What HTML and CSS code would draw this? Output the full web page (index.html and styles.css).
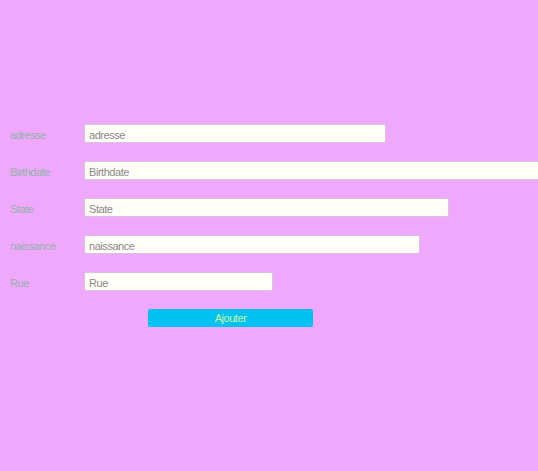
FILE: index.html
```html
<!DOCTYPE html>
<html>
<head>
<meta charset="utf-8">
<link rel="stylesheet" href="styles.css">
</head>
<body>
<form class="form">
  <div class="row"><label class="lbl">adresse</label><input class="field w-adresse" placeholder="adresse"></div>
  <div class="row"><label class="lbl">Birthdate</label><input class="field w-birth" placeholder="Birthdate"></div>
  <div class="row"><label class="lbl">State</label><input class="field w-state" placeholder="State"></div>
  <div class="row"><label class="lbl">naissance</label><input class="field w-naiss" placeholder="naissance"></div>
  <div class="row"><label class="lbl">Rue</label><input class="field w-rue" placeholder="Rue"></div>
  <div class="actions"><button type="button" class="btn">Ajouter</button></div>
</form>
</body>
</html>
```
FILE: styles.css
```css
html, body {
  margin: 0;
  padding: 0;
  background: #efa8fd;
  overflow: hidden;
  height: 100%;
}
body {
  font-family: "Liberation Sans", Arial, sans-serif;
  font-size: 11px;
  letter-spacing: -0.45px;
}
.form {
  padding-top: 124px;
  padding-left: 10px;
  display: flex;
  flex-direction: column;
  gap: 18px;
}
.row {
  display: flex;
  align-items: center;
  height: 19px;
}
.lbl {
  width: 74px;
  flex: none;
  padding-top: 2px;
  color: #8fb3a6;
  font-size: 11px;
}
.field {
  flex: none;
  box-sizing: border-box;
  height: 19px;
  margin: 0;
  padding: 2px 4px 0;
  border: 1px solid #d6c4d6;
  border-radius: 2px;
  background: #fffdf8;
  font-family: inherit;
  font-size: 11px;
  letter-spacing: -0.45px;
  color: #8a8a8a;
}
.field::placeholder { color: #8a8a8a; opacity: 1; }
.w-adresse { width: 302px; }
.w-birth { width: 470px; }
.w-state { width: 365px; }
.w-naiss { width: 336px; }
.w-rue { width: 189px; }
.actions {
  padding-left: 138px;
}
.btn {
  box-sizing: border-box;
  width: 165px;
  height: 18px;
  margin: 0;
  padding: 0;
  border: none;
  border-radius: 2px;
  background: #00c2f2;
  color: #c8f7a0;
  font-family: inherit;
  font-size: 11px;
  letter-spacing: -0.45px;
}
```
